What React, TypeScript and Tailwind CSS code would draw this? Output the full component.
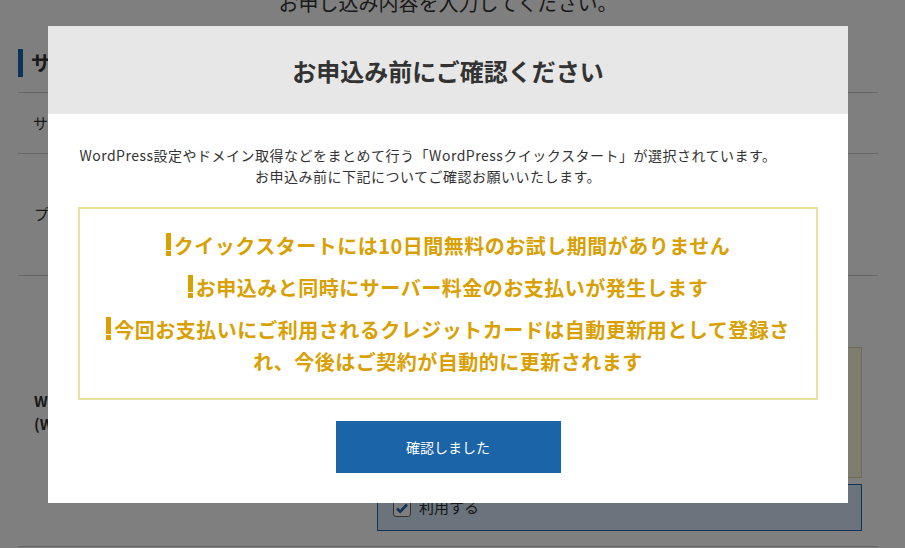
import React from 'react';

const FONT = { fontFamily: '"Noto Sans CJK JP", "Noto Sans", sans-serif' };

// ── Gold exclamation mark used in the notice list ─────────────────────
function Bang() {
  return (
    <span className="mr-[3px] inline-block w-[5px] align-[-2px]">
      <span className="block h-[17px] w-[5px] bg-[#d9a003]" />
      <span className="mt-[1.5px] block h-[5px] w-[5px] bg-[#d9a003]" />
    </span>
  );
}

// ── Page that sits behind the dialog ──────────────────────────────────
function Page() {
  return (
    <div className="min-h-[548px] w-[905px] overflow-hidden bg-white text-[#333]">
      <div className="ml-[18px] w-[860px]">
        <p className="-mt-[9px] text-center text-[20px] leading-[24px]">
          お申し込み内容を入力してください。
        </p>

        <div className="mt-[34px] flex h-[28px] items-center border-l-[5px] border-[#1a66b0] pl-[8px]">
          <span className="text-[20px] font-bold">サーバー契約内容</span>
        </div>

        <div className="mt-[15px] border-t border-[#ccc]" />
        <div className="flex h-[60px] items-center px-[15px] text-[15px]">サーバーID</div>
        <div className="border-t border-[#ccc]" />
        <div className="flex h-[121px] items-center px-[16px] text-[15px]">プラン</div>
        <div className="border-t border-[#ccc]" />

        <div className="flex h-[270px]">
          <div className="flex w-[359px] flex-col justify-center px-[16px] pt-[2px] text-[15px] font-bold leading-[23px]">
            <span>WordPressクイックスタート</span>
            <span>(WordPress同時申込み)</span>
          </div>
          <div className="flex w-[485px] flex-col justify-end pb-[15px]">
            <div className="h-[131px] border border-[#e0d4a0] bg-[#fffae0]" />
            <div className="mt-[6px] flex h-[47px] items-center gap-[8px] border border-[#1a66b0] bg-[#d6e8f8] px-[15px] text-[15px]">
              <span className="flex h-[18px] w-[18px] items-center justify-center rounded-[3px] border border-[#666] bg-white">
                <svg width="14" height="14" viewBox="0 0 14 14">
                  <path d="M2 7.5l3.2 3.2L12 3.5" fill="none" stroke="#1a66b0" strokeWidth="2.6" />
                </svg>
              </span>
              <span>利用する</span>
            </div>
          </div>
        </div>
        <div className="border-t border-[#ccc]" />
      </div>
    </div>
  );
}

// ── Confirmation dialog ───────────────────────────────────────────────
function ConfirmDialog() {
  return (
    <div className="fixed left-[48px] top-[26px] w-[800px] bg-white">
      <div className="flex h-[88px] items-center justify-center bg-[#e7e7e7]">
        <h2 className="pt-[2px] text-[24px] font-bold text-[#333]">お申込み前にご確認ください</h2>
      </div>

      <div className="px-[30px] pb-[30px] pt-[31px]">
        <p className="whitespace-nowrap pr-[40px] text-center text-[14px] leading-[21px] tracking-[0.5px] text-[#333]">
          WordPress設定やドメイン取得などをまとめて行う「WordPressクイックスタート」が選択されています。
          <br />
          お申込み前に下記についてご確認お願いいたします。
        </p>

        <div className="mt-[20px] border-2 border-[#e8e09c] px-[20px] pb-[20px] pt-[21px] text-center text-[20px] font-bold leading-[32px] tracking-[0.5px] text-[#d9a003]">
          <p>
            <Bang />
            クイックスタートには10日間無料のお試し期間がありません
          </p>
          <p className="mt-[10px]">
            <Bang />
            お申込みと同時にサーバー料金のお支払いが発生します
          </p>
          <p className="mt-[10px]">
            <Bang />
            今回お支払いにご利用されるクレジットカードは自動更新用として登録され、今後はご契約が自動的に更新されます
          </p>
        </div>

        <button className="mx-auto mt-[21px] block h-[52px] w-[225px] bg-[#1b64a8] text-[14px] text-white">
          確認しました
        </button>
      </div>
    </div>
  );
}

export default function App() {
  return (
    <div style={FONT} className="relative">
      <Page />
      <div className="fixed inset-0 bg-black/50" />
      <ConfirmDialog />
    </div>
  );
}
